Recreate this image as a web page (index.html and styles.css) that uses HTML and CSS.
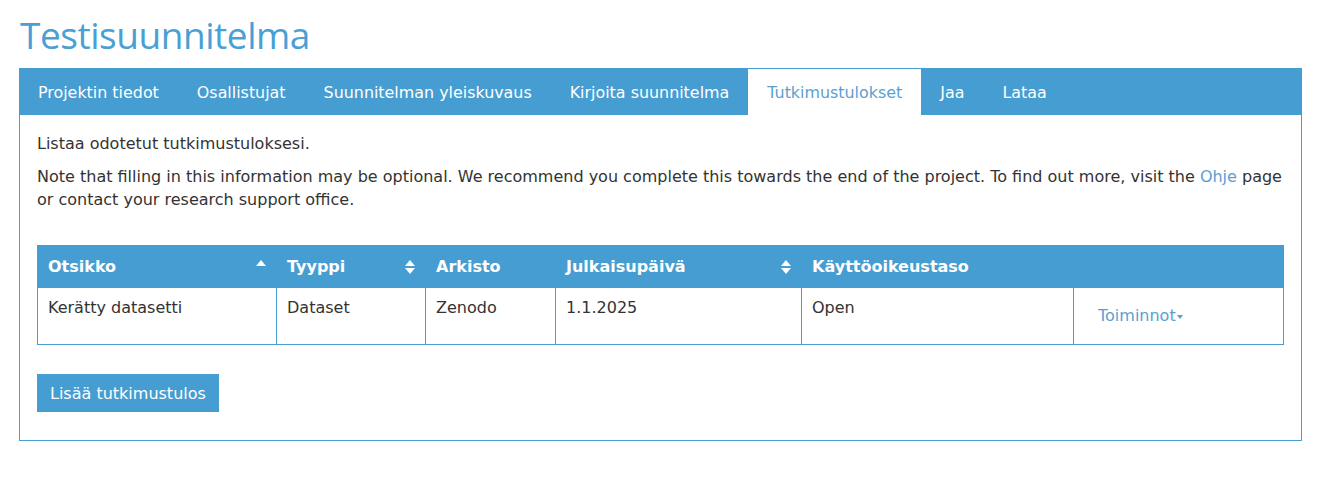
FILE: index.html
```html
<!DOCTYPE html>
<html lang="fi">
<head>
<meta charset="utf-8">
<title>Testisuunnitelma</title>
<link rel="stylesheet" href="styles.css">
</head>
<body>
<div class="page">
  <h1 class="title">Testisuunnitelma</h1>
  <nav class="tabs">
    <a class="tab">Projektin tiedot</a>
    <a class="tab">Osallistujat</a>
    <a class="tab">Suunnitelman yleiskuvaus</a>
    <a class="tab">Kirjoita suunnitelma</a>
    <a class="tab active">Tutkimustulokset</a>
    <a class="tab">Jaa</a>
    <a class="tab">Lataa</a>
  </nav>
  <div class="panel">
    <p class="intro">Listaa odotetut tutkimustuloksesi.</p>
    <p class="note">Note that filling in this information may be optional. We recommend you complete this towards the end of the project. To find out more, visit the <a class="link">Ohje</a> page or contact your research support office.</p>
    <table class="results">
      <thead>
        <tr>
          <th class="c1"><span class="th-in">Otsikko<span class="sort up"></span></span></th>
          <th class="c2"><span class="th-in">Tyyppi<span class="sort both"></span></span></th>
          <th class="c3"><span class="th-in">Arkisto</span></th>
          <th class="c4"><span class="th-in">Julkaisupäivä<span class="sort both"></span></span></th>
          <th class="c5"><span class="th-in">Käyttöoikeustaso</span></th>
          <th class="c6"></th>
        </tr>
      </thead>
      <tbody>
        <tr>
          <td>Kerätty datasetti</td>
          <td>Dataset</td>
          <td>Zenodo</td>
          <td>1.1.2025</td>
          <td>Open</td>
          <td><a class="actions">Toiminnot<span class="caret"></span></a></td>
        </tr>
      </tbody>
    </table>
    <button class="add">Lisää tutkimustulos</button>
  </div>
</div>
</body>
</html>
```
FILE: styles.css
```css
html, body {
  margin: 0;
  padding: 0;
  background: #fff;
}
body {
  font-family: "DejaVu Sans", Verdana, sans-serif;
  color: #333;
}
.page {
  padding: 0 16px 0 19px;
}
.title {
  font-family: "Open Sans", sans-serif;
  font-weight: 400;
  font-size: 37px;
  color: #4a9fd5;
  margin: 0;
  padding: 10px 0 0 1px;
  height: 58px;
  line-height: 50px;
  letter-spacing: -0.45px;
}
.tabs {
  display: flex;
  background: #469dd1;
  height: 47px;
}
.tab {
  display: flex;
  align-items: center;
  padding: 0 19px;
  color: #fff;
  font-size: 15.9px;
  margin-top: 1px;
  cursor: pointer;
}
.tab.active {
  background: #fff;
  color: #5b9fd0;
}
.panel {
  border: 1px solid #469dd1;
  border-top: 0;
  padding: 18px 17px 28px 17px;
}
.intro {
  margin: 0 0 10px 0;
  font-size: 16px;
  line-height: 22px;
}
.note {
  margin: 0 0 34px 0;
  font-size: 16px;
  line-height: 23px;
}
.link {
  color: #5b9fd0;
}
.results {
  width: 100%;
  border-collapse: collapse;
  font-size: 16px;
  margin-bottom: 29px;
}
.results th {
  background: #469dd1;
  color: #fff;
  text-align: left;
  height: 41px;
  padding: 0 10px;
  font-weight: bold;
  border: 1px solid #469dd1;
}
.th-in {
  display: flex;
  align-items: center;
  justify-content: space-between;
}
.c1 { width: 218px; }
.c2 { width: 128px; }
.c3 { width: 109px; }
.c4 { width: 225px; }
.c5 { width: 251px; }
.results td {
  border: 1px solid #469dd1;
  vertical-align: top;
  padding: 10px 10px 0 10px;
  height: 46px;
}
.sort {
  display: inline-block;
  width: 10px;
  height: 14px;
  position: relative;
}
.sort::before, .sort::after {
  content: "";
  position: absolute;
  left: 0;
  border-left: 5px solid transparent;
  border-right: 5px solid transparent;
}
.sort.up::before {
  top: 0;
  border-bottom: 6px solid #fff;
}
.sort.both::before {
  top: 0;
  border-bottom: 6px solid #fff;
}
.sort.both::after {
  top: 8px;
  border-top: 6px solid #fff;
}
.actions {
  display: inline-flex;
  align-items: center;
  color: #5b9fd0;
  padding: 8px 14px 7px;
  cursor: pointer;
}
.caret {
  display: inline-block;
  border-left: 3px solid transparent;
  border-right: 3px solid transparent;
  border-top: 4px solid #5b9fd0;
  margin-left: 1px;
  margin-top: 2px;
}
.add {
  font-family: "DejaVu Sans", Verdana, sans-serif;
  font-size: 16px;
  background: #469dd1;
  color: #fff;
  border: 0;
  padding: 0 13px;
  height: 38px;
  cursor: pointer;
}
```
